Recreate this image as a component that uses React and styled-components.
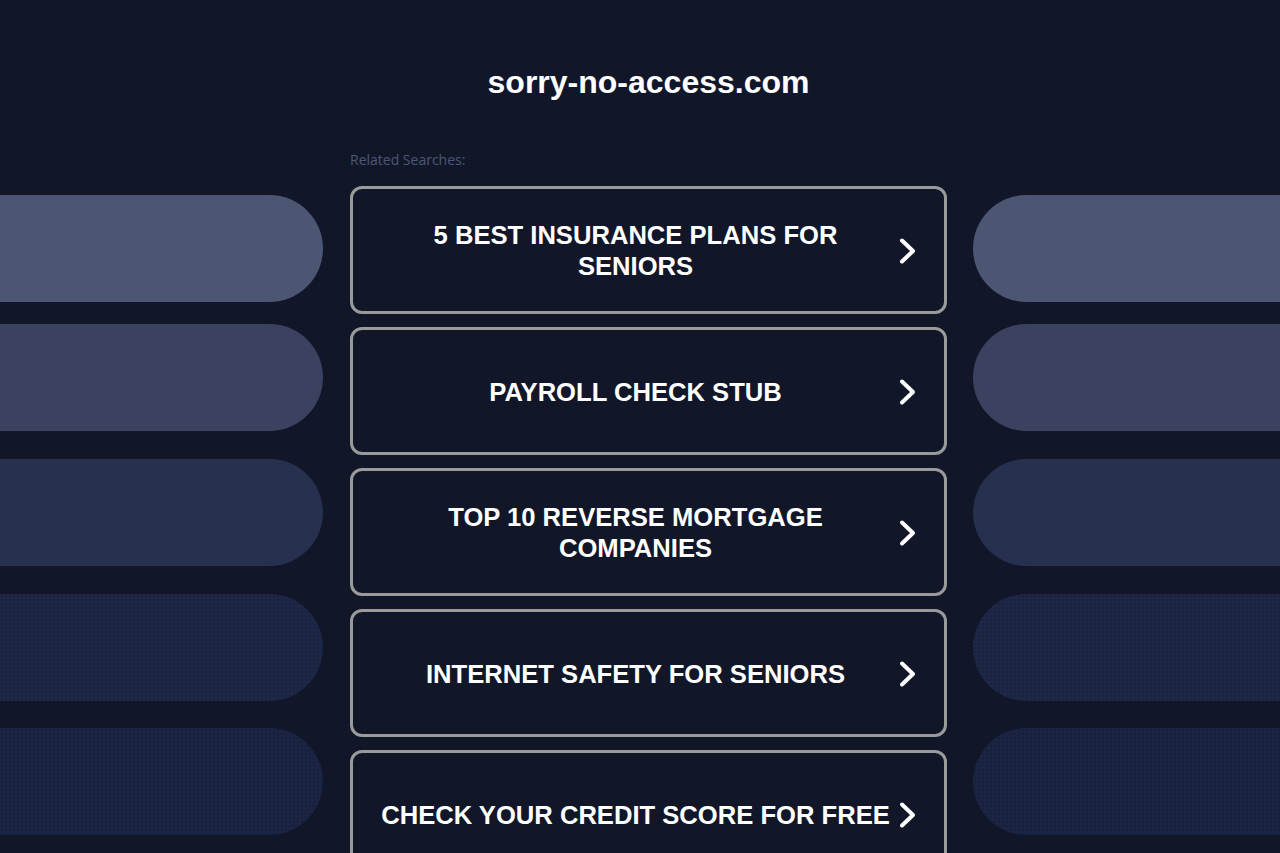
import styled, { createGlobalStyle } from "styled-components";

const GlobalStyle = createGlobalStyle`
  html, body {
    margin: 0;
    padding: 0;
    background: #111729;
  }
  body {
    font-family: "Liberation Sans", Arial, sans-serif;
    overflow: hidden;
  }
`;

const Page = styled.div`
  display: grid;
  grid-template-columns: 323px 597px 1fr;
  column-gap: 27px;
  min-height: 853px;
  background: #111729;
`;

const Stripes = styled.div`
  display: flex;
  flex-direction: column;
  padding-top: 195px;
`;

const Pill = styled.div`
  height: 107px;
  margin-top: ${(p) => p.$top}px;
  margin-left: ${(p) => (p.$side === "right" ? "-1px" : "0")};
  background-color: ${(p) => p.$color};
  border-radius: ${(p) => (p.$side === "left" ? "0 54px 54px 0" : "54px 0 0 54px")};
  ${(p) =>
    p.$dotted &&
    `background-image: radial-gradient(rgba(10, 16, 36, 0.35) 0.6px, transparent 0.9px);
     background-size: 4px 4px;`}
`;

const Center = styled.main`
  display: flex;
  flex-direction: column;
`;

const Domain = styled.h1`
  margin: 64px 0 0;
  font-size: 32px;
  line-height: 36px;
  font-weight: 700;
  color: #ffffff;
  text-align: center;
`;

const Label = styled.div`
  margin-top: 50px;
  font-family: "Open Sans", sans-serif;
  font-size: 14px;
  line-height: 20px;
  font-weight: 500;
  color: #4d5778;
`;

const List = styled.div`
  display: flex;
  flex-direction: column;
  gap: 13px;
  margin-top: 16px;
`;

const Card = styled.a`
  display: flex;
  align-items: center;
  height: 128px;
  box-sizing: border-box;
  padding: 2px 26px 0 24px;
  gap: 4px;
  border: 3px solid #9a9a9a;
  border-radius: 12px;
  text-decoration: none;
  cursor: pointer;
`;

const CardText = styled.span`
  flex: 1;
  text-align: center;
  font-size: 25.6px;
  line-height: 31px;
  font-weight: 700;
  color: #ffffff;
  text-transform: uppercase;
`;

const Chevron = () => (
  <svg width="20" height="28" viewBox="0 0 20 28" fill="none">
    <path
      d="M4 3.5 L15 14 L4 24.5"
      stroke="#ffffff"
      strokeWidth="4"
      strokeLinecap="round"
      strokeLinejoin="round"
    />
  </svg>
);

const pills = [
  { color: "#4c5571", top: 0 },
  { color: "#3a4260", top: 22 },
  { color: "#27304e", top: 28 },
  { color: "#1e2746", top: 28, dotted: true },
  { color: "#1b2442", top: 27, dotted: true },
];

const searches = [
  "5 Best Insurance Plans for Seniors",
  "Payroll Check Stub",
  "Top 10 Reverse Mortgage Companies",
  "Internet Safety for Seniors",
  "Check Your Credit Score for Free",
];

function StripeColumn({ side }) {
  return (
    <Stripes>
      {pills.map((p, i) => (
        <Pill key={i} $side={side} $color={p.color} $top={p.top} $dotted={p.dotted} />
      ))}
    </Stripes>
  );
}

export default function App() {
  return (
    <>
      <GlobalStyle />
      <Page>
        <StripeColumn side="left" />
        <Center>
          <Domain>sorry-no-access.com</Domain>
          <Label>Related Searches:</Label>
          <List>
            {searches.map((s) => (
              <Card key={s}>
                <CardText>{s}</CardText>
                <Chevron />
              </Card>
            ))}
          </List>
        </Center>
        <StripeColumn side="right" />
      </Page>
    </>
  );
}
